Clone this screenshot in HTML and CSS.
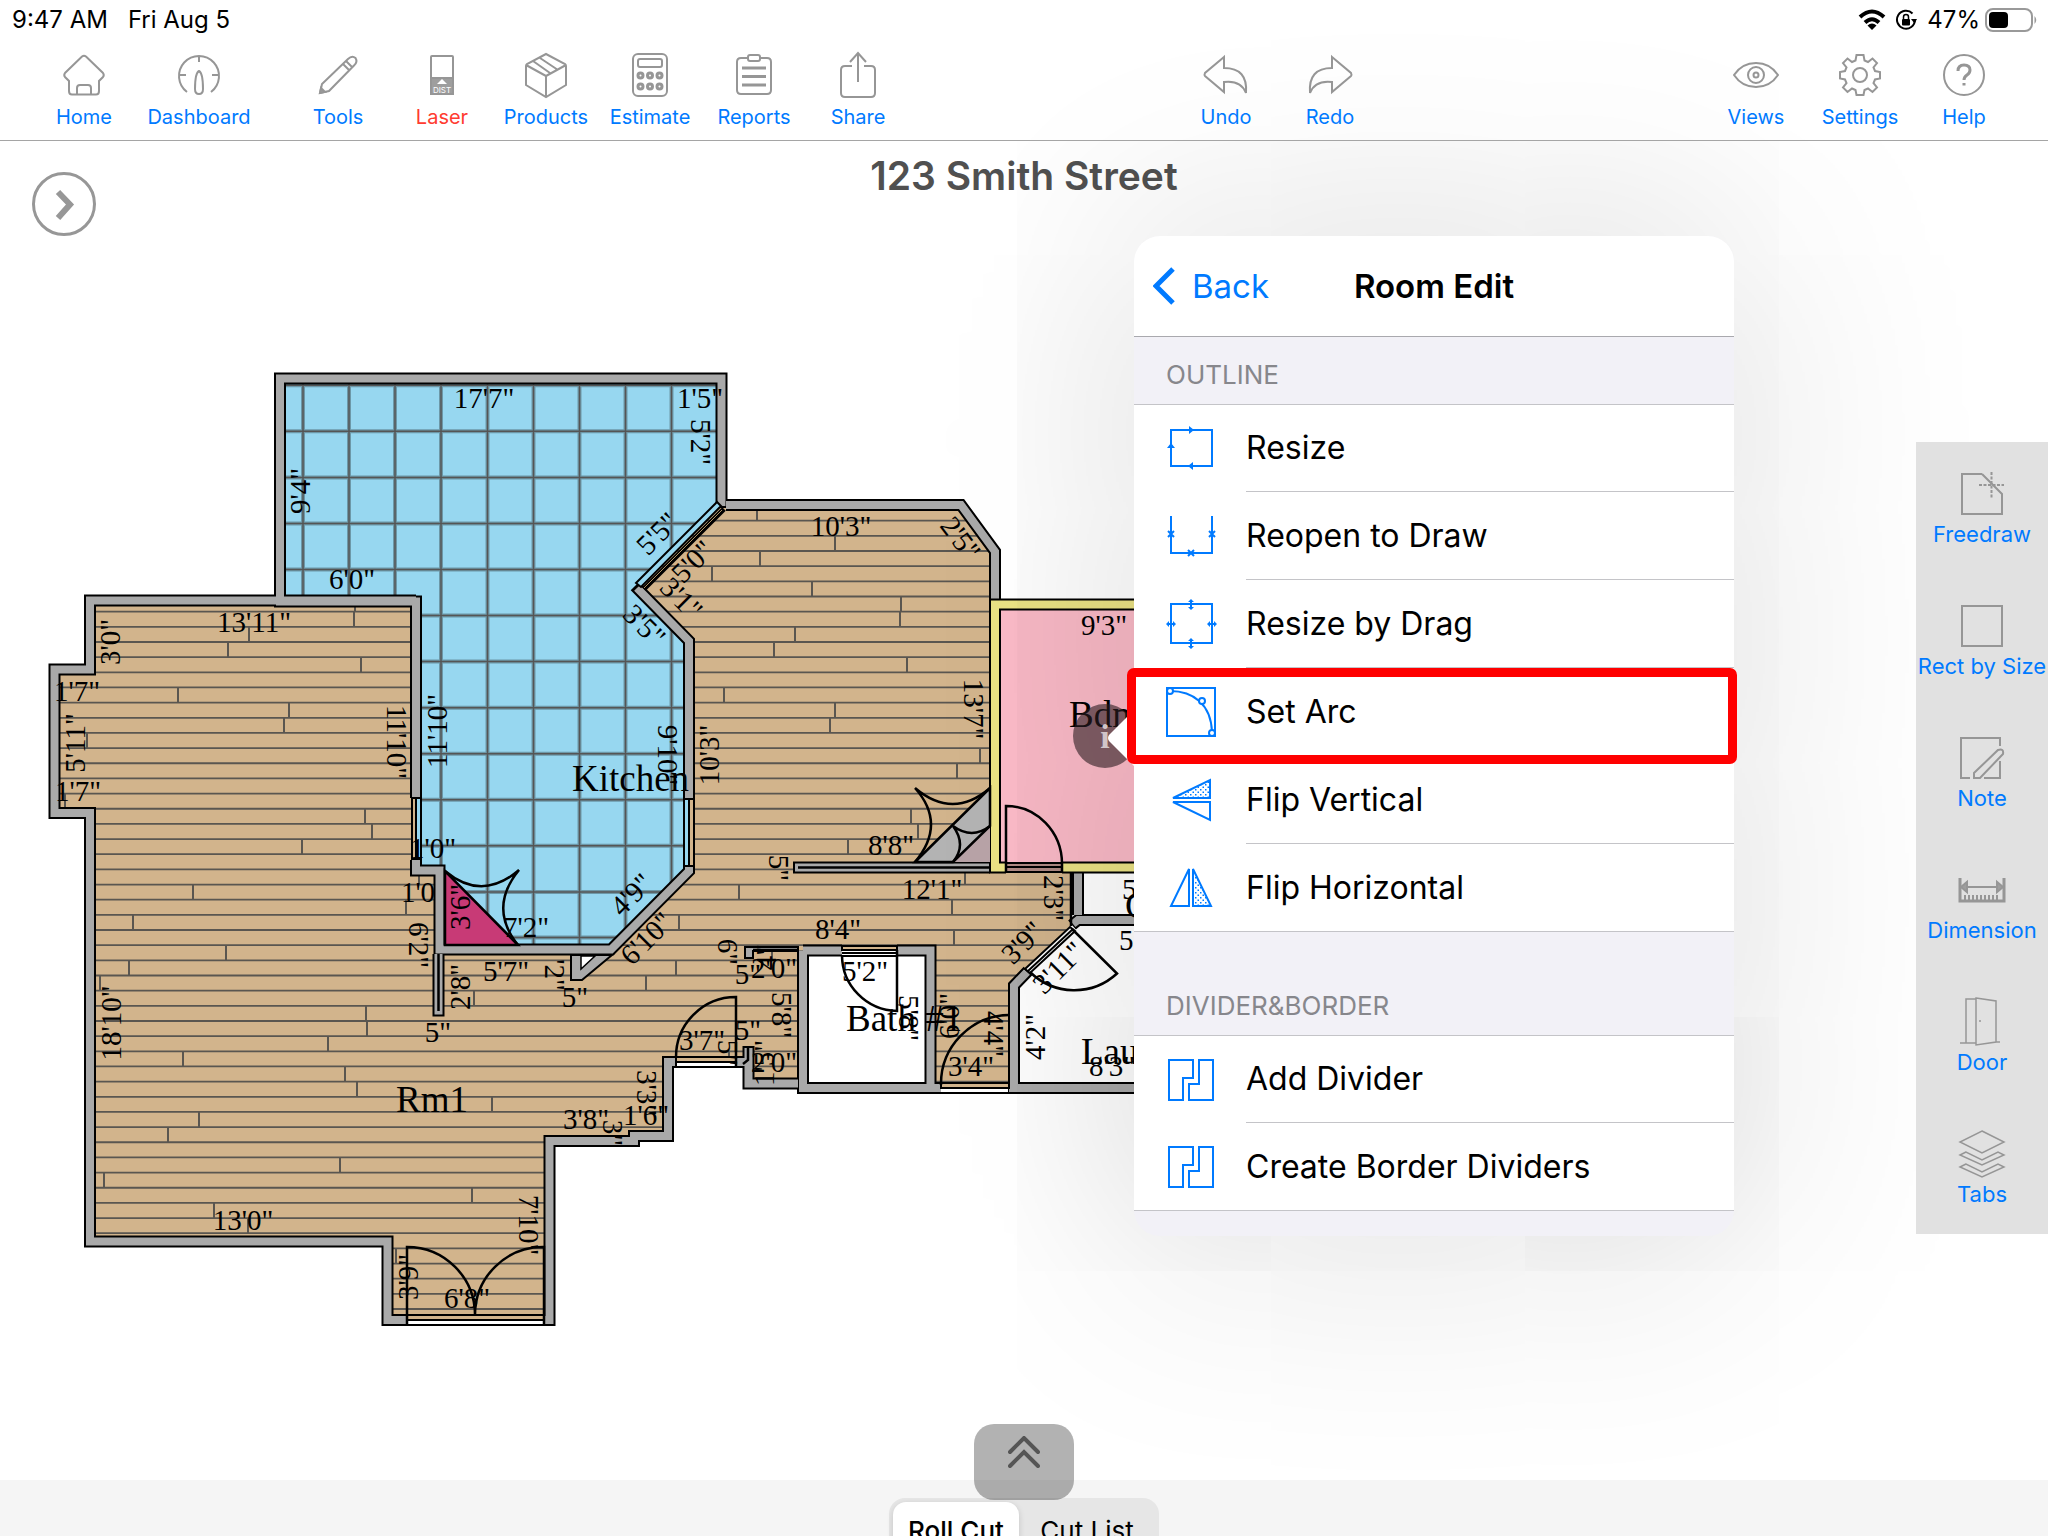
FILE: index.html
```html
<!DOCTYPE html>
<html lang="en">
<head>
<meta charset="utf-8">
<title>123 Smith Street</title>
<meta name="viewport" content="width=device-width, initial-scale=1">
<link rel="stylesheet" href="styles.css">
</head>
<body>
<div class="app">
  <header class="top">
    <div class="status">
      <span>9:47 AM</span>
      <span>Fri Aug 5</span>
      <span class="status-right">
        <svg class="wifi" viewBox="0 0 28 22" aria-hidden="true"><g fill="none" stroke="#000" stroke-width="4"><path d="M2 8Q14 -3 26 8"/><path d="M7 13.500Q14 7 21 13.500"/></g><path d="M14 21L9.500 16.500Q14 12.500 18.500 16.500Z"/></svg>
        <svg class="lock" viewBox="0 0 22 22" aria-hidden="true"><path d="M17.500 4.500A9 9 0 1 0 20 11" fill="none" stroke="#000" stroke-width="2"/><path d="M16 10H22L19.500 14.500Z"/><rect x="7" y="10" width="8" height="6.500" rx="1"/><path d="M8.500 10V8a2.500 2.500 0 0 1 5 0V10" fill="none" stroke="#000" stroke-width="1.500"/></svg>
        <span>47%</span>
        <svg class="battery" viewBox="0 0 53 24" aria-hidden="true"><rect x="1" y="1" width="46" height="22" rx="7" fill="none" stroke="#999" stroke-width="2"/><rect x="4" y="4" width="19" height="16" rx="4"/><path d="M49.500 8Q53 12 49.500 16Z" fill="#999"/></svg>
      </span>
    </div>
    <nav class="toolbar">
      <div class="tools">
        <button class="tool"><svg viewBox="0 0 48 48"><path d="M22 5.500Q24 4 26 5.500L43 22Q44.500 24 43 26L39 30V40Q39 43.500 36 43.500H12Q9 43.500 9 40V30L5 26Q3.500 24 5 22Z"/><path d="M17 43.500V37Q17 34 20 34H28Q31 34 31 37V43.500"/></svg>Home</button>
        <button class="tool wide"><svg viewBox="0 0 48 48"><path d="M12 41A20 20 0 1 1 36 41M24 5V11M4 24H11M37 24H44M24 20Q20 22 20 38Q20 43 24 43Q28 43 28 38Q28 22 24 20Z"/></svg>Dashboard</button>
        <button class="tool apart"><svg viewBox="0 0 48 48"><path d="M6 42L8 33L34 8Q38 4 41.500 7Q44 11 40 14.500L15 40ZM32 10L38 16M29 13L35 19"/><path class="fill" d="M6 42L7 37L11 41Z"/></svg>Tools</button>
        <button class="tool red"><svg viewBox="0 0 48 48"><rect x="13" y="5" width="22" height="38" rx="1"/><path class="fill" d="M13 27H35V43H13Z"/><path class="white" d="M24 28L29 33H19Z"/><text x="24" y="42">DIST</text></svg>Laser</button>
        <button class="tool"><svg viewBox="0 0 48 48"><path d="M24 3L43 13Q44 14 44 15V34L24 46L4 34V15Q4 14 5 13ZM4 14L24 25L44 14M24 25V46M18 7L36 19M11 10L28 22"/></svg>Products</button>
        <button class="tool"><svg viewBox="0 0 48 48"><rect x="7" y="3" width="34" height="42" rx="5"/><rect x="12" y="8" width="24" height="8" rx="2"/><g stroke-width="3"><circle cx="14.500" cy="24.500" r="2.500"/><circle cx="24" cy="24.500" r="2.500"/><circle cx="33.500" cy="24.500" r="2.500"/><circle cx="14.500" cy="35.500" r="2.500"/><circle cx="24" cy="35.500" r="2.500"/><circle cx="33.500" cy="35.500" r="2.500"/></g></svg>Estimate</button>
        <button class="tool"><svg viewBox="0 0 48 48"><path d="M18 7H11Q7 7 7 11V39Q7 43 11 43H37Q41 43 41 39V11Q41 7 37 7H30"/><rect x="18" y="4" width="12" height="6" rx="2"/><path stroke-width="3" d="M12 17H36M12 25.500H36M12 34H36"/></svg>Reports</button>
        <button class="tool"><svg viewBox="0 0 48 48"><path d="M18 15H11Q7 15 7 19V42Q7 46 11 46H37Q41 46 41 42V19Q41 15 37 15H30M24 31V3M16 11L24 2L32 11"/></svg>Share</button>
      </div>
      <div class="tools history">
        <button class="tool"><svg viewBox="0 0 48 48"><path d="M22 6L3 22Q2 24 3 25L22 41V31Q39 29 44 42Q46 17 22 17Z"/></svg>Undo</button>
        <button class="tool"><svg viewBox="0 0 48 48"><path d="M26 6L45 22Q46 24 45 25L26 41V31Q9 29 4 42Q2 17 26 17Z"/></svg>Redo</button>
      </div>
      <div class="tools last">
        <button class="tool"><svg viewBox="0 0 48 48"><path d="M2 24Q10 12 24 12Q38 12 46 24Q38 36 24 36Q10 36 2 24Z"/><circle cx="24" cy="24" r="8"/><circle cx="24" cy="24" r="2.500"/></svg>Views</button>
        <button class="tool"><svg viewBox="0 0 48 48"><path d="M20.500 4H27.500L28.500 9.500L32 11L36.500 7.500L41 12L37.500 16.500L39 20L44 21V27.500L39 28.500L37.500 32L41 36.500L36.500 41L32 37.500L28.500 39L27.500 44H20.500L19.500 39L16 37.500L11.500 41L7 36.500L10.500 32L9 28.500L4 27.500V21L9 20L10.500 16.500L7 12L11.500 7.500L16 11L19.500 9.500Z"/><circle cx="24" cy="24" r="7"/></svg>Settings</button>
        <button class="tool"><svg viewBox="0 0 48 48"><circle cx="24" cy="24" r="20"/><path stroke-width="3" d="M18 20Q18 14 24 14Q30 14 30 19Q30 22 27 24Q24 26 24 29M24 32V34.500"/></svg>Help</button>
      </div>
    </nav>
  </header>

  <main class="stage">
    <svg class="plan" viewBox="0 141 1140 1260" role="img" aria-label="Floor plan">
      <defs>
        <clipPath id="floor"><path d="M90 600H416V870H439V954H612L693 873V641L640 588L721 505H961L995 551V868H1070V927L1012 985V1088H798V1084H748V1062H668V1136L634 1140H549V1320H387V1241H90V813H55V670H90Z"/></clipPath>
        <clipPath id="tiles"><path d="M280 378H721V506L637 588L689 641V871L611 949H439V870H416V601H280Z"/></clipPath>
        <path id="grid" d="M303 378V950M349 378V950M395 378V950M441 378V950M487.500 378V950M533.500 378V950M579.500 378V950M625.500 378V950M671.500 378V950M280 385.300H721M280 431.300H721M280 477.400H721M280 523.500H721M280 569.500H721M280 615.600H721M280 661.600H721M280 707.700H721M280 753.700H721M280 799.800H721M280 845.800H721M280 891.900H721M280 937.500H721"/>
      </defs>
      <g clip-path="url(#floor)">
        <path fill="#d2b48c" d="M40 500H1080V1330H40Z"/>
        <path stroke="#5a5650" stroke-width="1.800" fill="none" d="M40 520.700h1040m-1040 15.160h1040m-1040 15.160h1040m-1040 15.160h1040m-1040 15.160h1040m-1040 15.160h1040m-1040 15.160h1040m-1040 15.160h1040m-1040 15.160h1040m-1040 15.160h1040m-1040 15.160h1040m-1040 15.160h1040m-1040 15.160h1040m-1040 15.160h1040m-1040 15.160h1040m-1040 15.160h1040m-1040 15.160h1040m-1040 15.160h1040m-1040 15.160h1040m-1040 15.160h1040m-1040 15.160h1040m-1040 15.160h1040m-1040 15.160h1040m-1040 15.160h1040m-1040 15.160h1040m-1040 15.160h1040m-1040 15.160h1040m-1040 15.160h1040m-1040 15.160h1040m-1040 15.160h1040m-1040 15.160h1040m-1040 15.160h1040m-1040 15.160h1040m-1040 15.160h1040m-1040 15.160h1040m-1040 15.160h1040m-1040 15.160h1040m-1040 15.160h1040m-1040 15.160h1040m-1040 15.160h1040m-1040 15.160h1040m-1040 15.160h1040m-1040 15.160h1040m-1040 15.160h1040m-1040 15.160h1040m-1040 15.160h1040m-1040 15.160h1040m-1040 15.160h1040m-1040 15.160h1040m-1040 15.160h1040m-1040 15.160h1040m-1040 15.160h1040m-1040 15.160h1040"/>
        <path stroke="#5a5650" stroke-width="2" fill="none" d="M354 611v16M355 605v7M249 627v15M228 642v15M361 657v15M178 687v16M289 703v15M284 718v15M87 733v15M65 794v15M365 809v15M372 824v15M302 839v15M419 875v10M193 885v15M406 900v15M133 915v15M226 945v15M129 960v15M366 1006v15M367 1021v15M474 991v15M492 1097v15M472 1188v15M396 1249v15M676 960v15M646 976v15M679 915v15M739 885v15M729 1051v12M757 509v12M835 536v15M760 551v15M712 566v15M812 581v15M901 596v15M900 612v15M795 627v15M774 642v15M907 657v15M724 687v16M835 703v15M830 718v15M980 748v15M957 763v15M911 809v15M918 824v15M848 839v15M965 872v12M952 900v15M954 930v15M772 945v15M100 975v15M328 1036v15M183 1051v15M345 1066v15M357 1081v15M199 1112v15M168 1127v15M340 1157v15M104 1172v15M214 1203v15M248 1218v15"/>
      </g>
      <g clip-path="url(#tiles)">
        <path fill="#97d7f0" d="M280 378H721V950H280Z"/>
        <use href="#grid" stroke="#6d98a8" stroke-width="4" fill="none"/>
        <use href="#grid" stroke="#555" stroke-width="1.500" fill="none"/>
      </g>

      <path fill="#fff" d="M803 950H930V1088H803ZM1079 920H1140V1088H1014V986L1070 926ZM1079 872H1140V920H1079Z"/>
      <path fill="#f9b9c6" d="M995 604H1140V867H995Z"/>
      <path fill="#fff" d="M676 1062H736V1067H676ZM407 1320H544V1325H407ZM941 1088H1009V1093H941Z"/>

      <g class="wall-line">
        <path d="M416 600.500H90V669.500H54.500V813H90V1241.500H387.500V1320H407M544 1320H549.500V1141H634V1136H668V1062H676M736 1062H748.500M748.500 1046V1083.500H798"/>
        <path d="M726 505H961L995 551.500V600"/>
        <path d="M721.500 508V378.500H280V601.500H416V798M416 860V870.500H439.500V949.500H611L689 871V866M689 799V641L635 586"/>
        <path d="M803 950.500H842M897 950.500H930.500V1088H803V950.500"/>
        <path d="M1140 920H1078L1072 925M1028 971L1014 985.500V1088H1140M930 1088H941M1009 1088H1014M1078 872V915"/>
        <path d="M793 867.500H990M438.500 954V1016.500"/>
      </g>
      <g class="wall-fill">
        <path d="M416 600.500H90V669.500H54.500V813H90V1241.500H387.500V1320H407M544 1320H549.500V1141H634V1136H668V1062H676M736 1062H748.500M748.500 1048V1083.500H798"/>
        <path d="M726 505H961L995 551.500V600"/>
        <path d="M721.500 506V378.500H280V601.500H416V798M416 860V870.500H439.500V949.500H611L689 871V866M689 799V641L637 588"/>
        <path d="M803 950.500H842M897 950.500H930.500V1088H803V950.500"/>
        <path d="M1140 920H1078L1073 924M1027 972L1014 985.500V1088H1140M930 1088H941M1009 1088H1014M1078 872V915"/>
        <path d="M795 867.500H990M438.500 954V1014.500"/>
      </g>
      <path d="M798 867.500H990M438.500 954V1011M1071 872V926" stroke="#000" stroke-width="2.500"/>
      <path d="M1140 604.500H995V867.500H1006M1062 867.500H1140" fill="none" stroke="#000" stroke-width="12"/>
      <path d="M1140 604.500H995V867.500H1006M1062 867.500H1140" fill="none" stroke="#eae284" stroke-width="8"/>

      <g fill="#aaa" stroke="#000" stroke-width="2">
        <path d="M571 955V980H582L612 955Z"/>
        <path fill="#fff" stroke-width="1.500" d="M581 956H595L581 969Z"/>
        <path d="M745 947V958H753V951H798V947Z"/>
      </g>
      <path d="M753 950H798M748 1048V1060L743 1064" stroke="#000" stroke-width="2.500" fill="none"/>

      <g stroke="#000" stroke-width="2.500">
        <path fill="#c83a76" d="M445 871V945H518Z"/>
        <path fill="#b8a3a7" stroke="none" d="M953 862L990 826V862Z"/>
        <path fill="#b3b3b3" d="M915 862L990 788V826L953 862Z"/>
        <path fill="none" d="M445 871Q482 902 519 870Q488 908 518 945M915 788Q953 820 990 788M915 788Q947 824 915 862M953 826Q972 840 990 826M953 826Q967 845 953 862"/>
      </g>

      <g fill="none" stroke="#000" stroke-width="2">
        <path fill="#97d7f0" d="M412 798H421V859H412ZM684 799H694V866H684Z"/>
        <path fill="#d2b48c" d="M412 798H416V859H412ZM689 799H694V866H689Z"/>
        <path fill="#97d7f0" d="M636 583L717 502L721 506L641 587Z"/>
        <path stroke-width="5" d="M644 589L724 509"/>
        <path stroke="#b09468" stroke-width="1" d="M644 588L722 510"/>
        <path fill="#d2b48c" d="M676 1057H736V1062H676ZM407 1315H544V1320H407ZM941 1083H1009V1088H941ZM842 946H897V950H842Z"/>
        <path d="M676 1067H736M676 1057V1067M407 1325H544M941 1093H1009M842 956H897M842 953H897"/>
        <path fill="#b08a84" d="M1006 863H1062V872H1006ZM1006 867H1062"/>
        <path fill="#fff" d="M1025 969L1070 927L1075 931L1030 973ZM1028 971L1073 929"/>
        <g stroke-width="2.500">
          <path d="M736 1067V997A60 60 0 0 0 676 1057"/>
          <path d="M842 955A56 56 0 0 0 897 1011V950"/>
          <path d="M941 1085A69 69 0 0 1 1009 1015"/>
          <path d="M1006 872V806A56 58 0 0 1 1062 864V872"/>
          <path d="M1072 929L1117 973.500A63 63 0 0 1 1030 972"/>
          <path d="M407 1325V1247A68 68 0 0 1 475 1315V1305M475 1315A68 68 0 0 1 544 1247V1325"/>
        </g>
      </g>

      <g class="dims">
        <text transform="translate(484 399)" dy="9">17'7"</text>
        <text transform="translate(700 399)" dy="9">1'5"</text>
        <text transform="translate(700 442) rotate(90)" dy="9">5'2"</text>
        <text transform="translate(301 491) rotate(-90)" dy="9">9'4"</text>
        <text transform="translate(352 580)" dy="9">6'0"</text>
        <text transform="translate(254 623)" dy="9">13'11"</text>
        <text transform="translate(111 642) rotate(-90)" dy="9">3'0"</text>
        <text transform="translate(77 692)" dy="9">1'7"</text>
        <text transform="translate(76 743) rotate(-90)" dy="9">5'11"</text>
        <text transform="translate(78 792)" dy="9">1'7"</text>
        <text transform="translate(396 742) rotate(90)" dy="9">11'10"</text>
        <text transform="translate(438 731) rotate(-90)" dy="9">11'10"</text>
        <text transform="translate(433 849)" dy="9">1'0"</text>
        <text transform="translate(418 893)" dy="9">1'0</text>
        <text transform="translate(418 945) rotate(90)" dy="9">6'2"</text>
        <text transform="translate(658 534) rotate(-45)" dy="9">5'5"</text>
        <text transform="translate(693 562) rotate(-45)" dy="9">5'0"</text>
        <text transform="translate(681 599) rotate(45)" dy="9">3'1"</text>
        <text transform="translate(644 626) rotate(45)" dy="9">3'5"</text>
        <text transform="translate(667 755) rotate(90)" dy="9">9'10"</text>
        <text transform="translate(710 755) rotate(-90)" dy="9">10'3"</text>
        <text transform="translate(461 907) rotate(-90)" dy="9">3'6"</text>
        <text transform="translate(526 928)" dy="9">7'2"</text>
        <text transform="translate(632 895) rotate(-45)" dy="9">4'9"</text>
        <text transform="translate(647 939) rotate(-45)" dy="9">6'10"</text>
        <text transform="translate(506 972)" dy="9">5'7"</text>
        <text transform="translate(461 987) rotate(-90)" dy="9">2'8"</text>
        <text transform="translate(438 1033)" dy="9">5"</text>
        <text transform="translate(554 975) rotate(90)" dy="9">'2"</text>
        <text transform="translate(575 998)" dy="9">5"</text>
        <text transform="translate(727 952) rotate(90)" dy="9">6"</text>
        <text transform="translate(748 975)" dy="9">5"</text>
        <text transform="translate(774 969)" dy="9">2'0"</text>
        <text transform="translate(767 957) rotate(-90)" dy="9">4"</text>
        <text transform="translate(781 1015) rotate(90)" dy="9">5'8"</text>
        <text transform="translate(748 1031)" dy="9">5"</text>
        <text transform="translate(702 1041)" dy="9">3'7"</text>
        <text transform="translate(727 1053) rotate(90)" dy="9">5"</text>
        <text transform="translate(774 1063)" dy="9">2'0"</text>
        <text transform="translate(765 1063) rotate(-90)" dy="9">1'5"</text>
        <text transform="translate(646 1093) rotate(90)" dy="9">3'3"</text>
        <text transform="translate(646 1116)" dy="9">1'6"</text>
        <text transform="translate(586 1120)" dy="9">3'8"</text>
        <text transform="translate(612 1133) rotate(90)" dy="9">3"</text>
        <text transform="translate(528 1225) rotate(90)" dy="9">7'10"</text>
        <text transform="translate(409 1277) rotate(-90)" dy="9">3'9"</text>
        <text transform="translate(467 1299)" dy="9">6'8"</text>
        <text transform="translate(243 1221)" dy="9">13'0"</text>
        <text transform="translate(112 1023) rotate(-90)" dy="9">18'10"</text>
        <text transform="translate(841 527)" dy="9">10'3"</text>
        <text transform="translate(960 539) rotate(53)" dy="9">2'5"</text>
        <text transform="translate(1104 626)" dy="9">9'3"</text>
        <text transform="translate(973 709) rotate(90)" dy="9">13'7"</text>
        <text transform="translate(891 846)" dy="9">8'8"</text>
        <text transform="translate(778 868) rotate(90)" dy="9">5"</text>
        <text transform="translate(932 890)" dy="9">12'1"</text>
        <text transform="translate(1053 898) rotate(90)" dy="9">2'3"</text>
        <text transform="translate(838 930)" dy="9">8'4"</text>
        <text transform="translate(865 972)" dy="9">5'2"</text>
        <text transform="translate(908 1018) rotate(90)" dy="9">5'8"</text>
        <text transform="translate(950 1016) rotate(-90)" dy="9">6'0"</text>
        <text transform="translate(993 1034) rotate(90)" dy="9">4'4"</text>
        <text transform="translate(971 1067)" dy="9">3'4"</text>
        <text transform="translate(1036 1037) rotate(-90)" dy="9">4'2"</text>
        <text transform="translate(1023 943) rotate(-45)" dy="9">3'9"</text>
        <text transform="translate(1059 968) rotate(-45)" dy="9">3'11"</text>
        <text transform="translate(1145 890)" dy="9">5'3"</text>
        <text transform="translate(1142 941)" dy="9">5'3"</text>
        <text transform="translate(1112 1067)" dy="9">8'3"</text>
      </g>
      <g class="rooms">
        <text x="572" y="791">Kitchen</text>
        <text x="396" y="1112">Rm1</text>
        <text x="846" y="1031">Bath #1</text>
        <text x="1069" y="727">Bdm</text>
        <text x="1081" y="1064">Laun</text>
        <text x="1125" y="918">Cl</text>
      </g>
      <circle cx="1105" cy="736" r="32" fill="#2d1e23" fill-opacity=".6"/>
      <text class="info" x="1105" y="748">i</text>
    </svg>

    <button class="expand" aria-label="Expand"><svg viewBox="0 0 64 64"><circle cx="32" cy="32" r="30.500" fill="none" stroke="#979797" stroke-width="3"/><path d="M26 20L38 32.500L26 46" fill="none" stroke="#979797" stroke-width="6"/></svg></button>
    <h1 class="title">123 Smith Street</h1>
    <aside class="side">
      <button class="side-item"><svg viewBox="0 0 48 48"><path d="M24 4H4V44H44V24L24 4"/><path stroke-dasharray="3 1.500" d="M21 15H46M33.500 2V28"/></svg>Freedraw</button>
      <button class="side-item"><svg viewBox="0 0 48 48"><path d="M4 4H44V44H4Z"/></svg>Rect by Size</button>
      <button class="side-item"><svg viewBox="0 0 48 48"><path d="M12 44H3V4H42V12M42 27V44H26M16 44V39L40 16Q46 14 45 20L22 44Z"/></svg>Note</button>
      <button class="side-item"><svg viewBox="0 0 48 48"><path stroke-width="3" d="M2 12V35H46V12"/><path d="M6 21H42M7 29V35M11 29V35M15 29V35M19 29V35M23 29V35M27 29V35M31 29V35M35 29V35M39 29V35"/><path class="fill" d="M3 21L9 16V26ZM45 21L39 16V26Z"/></svg>Dimension</button>
      <button class="side-item"><svg viewBox="0 0 48 48"><g stroke-width="1.500"><path d="M2 45H8V1H18M8 45H18M38 44H42M8 1V45M18 0L38 3V44L18 47Z"/><path d="M21 23H23"/></g></svg>Door</button>
      <button class="side-item"><svg viewBox="0 0 48 48"><g stroke-width="1.500"><path d="M24 1L46 12L24 23L2 12ZM8 22L2 25L24 35L46 25L40 22L24 30ZM8 34L2 37L24 47L46 37L40 34L24 42Z"/></g></svg>Tabs</button>
    </aside>
  </main>

  <footer class="bottom">
    <div class="segmented"><button class="segment on">Roll Cut</button><button class="segment">Cut List</button></div>
  </footer>
  <button class="pull" aria-label="Show panel"><svg viewBox="0 0 32 32"><path d="M2 16L16 2L30 16M2 30L16 16L30 30" fill="none" stroke="#555" stroke-width="4" stroke-linecap="round"/></svg></button>

  <section class="popover" aria-label="Room Edit">
    <svg class="arrow" viewBox="0 0 27 56" aria-hidden="true"><path d="M27 0L2 25Q0 28 2 31L27 56Z" fill="#fff"/></svg>
    <header class="pop-head">
      <button class="back"><svg viewBox="0 0 22 38"><path d="M20 2L3 19L20 36" fill="none" stroke="#007aff" stroke-width="5"/></svg>Back</button>
      <h2>Room Edit</h2>
    </header>
    <h3 class="group">OUTLINE</h3>
    <div class="menu">
      <button class="row"><svg viewBox="0 0 52 52"><path d="M6 7H47V43H6Z"/><path class="fill" d="M24 3L29 7L24 11ZM28 39L23 43L28 47ZM2 25L6 20L10 25Z"/></svg><span>Resize</span></button>
      <button class="row"><svg viewBox="0 0 52 52"><path d="M6 6V43H47V6M3 21L9 27M9 21L3 27M44 21L50 27M50 21L44 27M23 40L29 46M29 40L23 46"/></svg><span>Reopen to Draw</span></button>
      <button class="row"><svg viewBox="0 0 52 52"><path d="M6 6H47V45H6Z"/><path class="fill" d="M26 1L29 4H23ZM26 12L29 9H23ZM26 40L29 43H23ZM26 51L29 48H23ZM1 26L4 23V29ZM11 26L8 23V29ZM42 26L45 23V29ZM52 26L49 23V29Z"/><path d="M26 3V10M26 42V49M3 26H9M44 26H50"/></svg><span>Resize by Drag</span></button>
      <button class="row"><svg viewBox="0 0 52 52"><path d="M2 2H50V50H2Z"/><path d="M5 5C28 5 46 18 47 46"/><g fill="#fff"><circle cx="5" cy="5" r="3"/><circle cx="37" cy="15" r="3"/><circle cx="47" cy="47" r="3"/></g></svg><span>Set Arc</span></button>
      <button class="row"><svg viewBox="0 0 52 52"><defs><pattern id="dots" width="5" height="5" patternUnits="userSpaceOnUse"><path d="M0 0H1.500V1.500H0ZM2.500 2.500H4V4H2.500Z" fill="#007aff" stroke="none"/></pattern></defs><path fill="url(#dots)" d="M45 6V24H8Z"/><path d="M45 28V46L8 28Z"/></svg><span>Flip Vertical</span></button>
      <button class="row"><svg viewBox="0 0 52 52"><path d="M24 7V44H6Z"/><path fill="url(#dots)" d="M28 7V44H46Z"/></svg><span>Flip Horizontal</span></button>
    </div>
    <h3 class="group tall">DIVIDER&amp;BORDER</h3>
    <div class="menu">
      <button class="row"><svg viewBox="0 0 52 52"><path d="M4 6H28V24H18V46H4ZM34 6H48V46H24V30H34Z"/></svg><span>Add Divider</span></button>
      <button class="row"><svg viewBox="0 0 52 52"><path d="M4 6H28V24H18V46H4ZM34 6H48V46H24V30H34Z"/></svg><span>Create Border Dividers</span></button>
    </div>
    <div class="mark"></div>
  </section>
</div>
</body>
</html>
```
FILE: styles.css
```css
* { box-sizing: border-box; }
body { margin: 0; background: #fff; color: #000; font-family: Inter, "Liberation Sans", sans-serif; }
button { margin: 0; padding: 0; border: 0; background: none; font: inherit; color: inherit; }
h1, h2, h3 { margin: 0; font-weight: 400; }

.app { position: relative; display: flex; flex-direction: column; height: 100vh; overflow: hidden; }

.top { position: relative; z-index: 3; background: rgba(255, 255, 255, .5); border-bottom: 1px solid #a5a5a5; }
.status { display: flex; align-items: center; gap: 20px; height: 40px; padding: 0 10px 0 12px; font-size: 24px; line-height: 40px; }
.status-right { display: flex; align-items: center; gap: 5px; margin-left: auto; }
.wifi { width: 28px; height: 22px; }
.lock { width: 22px; height: 22px; margin: 0 5px 0 4px; }
.battery { width: 53px; height: 24px; }

.toolbar { display: flex; height: 100px; padding: 11px 32px 0; }
.tools { display: flex; }
.history { margin-left: 264px; }
.last { margin-left: auto; }
.tool { display: flex; flex-direction: column; align-items: center; gap: 6px; width: 104px; height: 78px; font-size: 20px; line-height: 24px; color: #007aff; }
.tool.wide { width: 126px; }
.tool.apart { margin-left: 24px; }
.tool.red { color: #ff3b30; }
.tool svg, .side-item svg { flex: none; fill: none; stroke: #969696; stroke-width: 2; overflow: visible; }
.tool svg { width: 48px; height: 48px; }
.tool .fill, .side-item .fill { fill: #9e9e9e; }
.tool .white { fill: #fff; stroke: none; }
.tool text { fill: #fff; stroke: none; font-size: 8px; text-anchor: middle; }

.stage { position: relative; flex: 1; display: grid; grid-template-columns: 1fr auto 1fr; align-items: start; }
.plan { position: absolute; left: 0; top: 0; width: 1140px; height: 1260px; }
.wall-line, .wall-fill { fill: none; }
.wall-line { stroke: #000; stroke-width: 12; }
.wall-fill { stroke: #a9a9a9; stroke-width: 8; }
.dims, .rooms { font-family: "Liberation Serif", serif; }
.dims { font-size: 29px; text-anchor: middle; }
.rooms { font-size: 37px; }
.info { font: bold 34px "Liberation Serif", serif; fill: #ddd0d3; text-anchor: middle; }

.expand { position: relative; width: 64px; height: 64px; margin: 31px 0 0 32px; }
.expand svg { display: block; }
.title { position: relative; padding-top: 12px; font-size: 39px; line-height: 46px; font-weight: 600; color: #505050; }
.side { position: relative; z-index: 3; justify-self: end; width: 132px; margin-top: 301px; background: rgba(222, 222, 222, .9); }
.side-item { display: flex; flex-direction: column; align-items: center; gap: 3px; width: 132px; height: 132px; padding-top: 28px; font-size: 22px; line-height: 26px; color: #007aff; white-space: nowrap; }
.side-item svg { width: 48px; height: 48px; }

.bottom { display: flex; justify-content: center; align-items: flex-start; height: 56px; padding-top: 18px; background: #f5f5f5; overflow: hidden; }
.segmented { display: flex; width: 270px; height: 64px; padding: 4px; border-radius: 16px; background: #e6e6e6; font-size: 26px; }
.segment { flex: 1; height: 56px; border-radius: 13px; }
.segment.on { flex: none; width: 126px; background: #fff; font-weight: 500; box-shadow: 0 2px 6px rgba(0, 0, 0, .15); }
.pull { position: absolute; left: 50%; bottom: 36px; width: 100px; height: 76px; margin-left: -50px; border-radius: 20px; background: rgba(0, 0, 0, .3); display: flex; justify-content: center; padding-top: 12px; }
.pull svg { width: 32px; height: 32px; }

.popover { position: absolute; z-index: 2; left: 1134px; top: 236px; width: 600px; padding-bottom: 25px; border-radius: 26px; background: #f2f1f7; box-shadow: 0 0 240px 10px rgba(12, 12, 4, .16); }
.arrow { position: absolute; left: -27px; top: 474px; width: 27px; height: 56px; }
.pop-head { display: grid; grid-template-columns: 1fr auto 1fr; align-items: center; height: 101px; padding: 0 19px; border-bottom: 1px solid #a9a9ae; border-radius: 26px 26px 0 0; background: #fff; font-size: 33px; line-height: 42px; }
.back { display: flex; align-items: center; gap: 17px; color: #007aff; }
.back svg { width: 22px; height: 38px; }
.pop-head h2 { font-size: 33px; font-weight: 600; }
.group { display: flex; align-items: flex-end; height: 67px; padding: 0 32px 13px; font-size: 26px; line-height: 32px; color: #87878c; }
.group.tall { height: 103px; }
.menu { border-top: 1px solid #c4c4c8; border-bottom: 1px solid #c4c4c8; background: #fff; }
.row { display: flex; align-items: center; gap: 29px; width: 100%; height: 88px; padding-left: 31px; font-size: 32px; line-height: 40px; text-align: left; }
.row svg { flex: none; width: 52px; height: 52px; fill: none; stroke: #007aff; stroke-width: 2; }
.row .fill { fill: #007aff; stroke: none; }
.row span { flex: 1; display: flex; align-items: center; height: 100%; border-bottom: 1px solid #c4c4c8; }
.row:first-child, .row:last-child { height: 87px; }
.row:last-child span { border-bottom: 0; }
.mark { position: absolute; left: -7px; right: -3px; top: 432px; height: 96px; border: 9px solid #f00; border-radius: 7px; }
```
